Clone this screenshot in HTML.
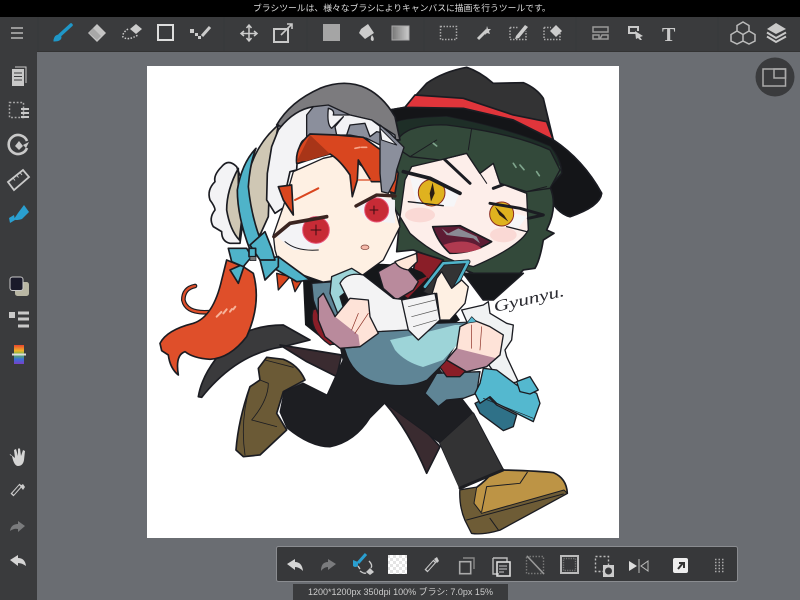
<!DOCTYPE html>
<html><head><meta charset="utf-8"><style>
html,body{margin:0;padding:0;background:#6a6d72}
body{width:800px;height:600px;overflow:hidden;position:relative;font-family:"Liberation Sans","Noto Sans CJK JP",sans-serif}
svg{position:absolute;left:0;top:0}
.t{position:absolute;white-space:nowrap}
</style></head><body>
<svg width="800" height="600" viewBox="0 0 800 600">
<defs>
<linearGradient id="gr" x1="0" x2="1" y1="0" y2="0"><stop offset="0" stop-color="#777"/><stop offset="1" stop-color="#ccc"/></linearGradient>
<linearGradient id="rb" x1="0" x2="0" y1="0" y2="1"><stop offset="0" stop-color="#e8452c"/><stop offset=".3" stop-color="#f0b42a"/><stop offset=".5" stop-color="#5fb84a"/><stop offset=".75" stop-color="#3a6fd8"/><stop offset="1" stop-color="#7a3fc8"/></linearGradient>
<pattern id="ch" width="6" height="6" patternUnits="userSpaceOnUse"><rect width="6" height="6" fill="#fff"/><rect width="3" height="3" fill="#e4e4e4"/><rect x="3" y="3" width="3" height="3" fill="#e4e4e4"/></pattern>
</defs>
<rect width="800" height="600" fill="#6a6d72"/>
<rect x="147" y="66" width="472" height="472" fill="#fff"/>

<g stroke="#1b1c22" stroke-linejoin="round" stroke-linecap="round">
<!-- back leg, tails -->
<g transform="translate(340 270) scale(.3333)" stroke-width="5">
<path d="M135 400L155 370L300 530L260 610Q205 480 135 400Z" fill="#3a2b30"/>
<path d="M300 520L400 430L490 600L360 655Z" fill="#333334"/>
<path d="M360 660L410 652Q440 630 452 612L490 600Q600 603 640 608Q680 625 682 670L480 780Q430 795 395 790L375 750Q358 710 360 660Z" fill="#bd9445"/>
<path d="M360 660L410 652L402 700L425 730L672 660L682 670L480 780Q430 795 395 790L375 750Q358 710 360 660Z" fill="#6e5c36" stroke-width="3"/>
<path d="M380 750L670 672M450 745L475 780M440 650L425 725M440 650L540 640L562 607" fill="none" stroke-width="3"/>
</g>
<g transform="translate(150 280) scale(.3333)" stroke-width="5">
<path d="M145 350Q160 260 260 170Q320 135 400 135L480 180L400 200Q260 220 155 352Z" fill="#3a3a3c"/>
<path d="M390 195L575 225L560 290L470 245Z" fill="#3a2b30"/>
<path d="M325 265L350 232L400 238Q445 255 465 300L400 335L380 400L410 450L330 525L280 530L258 510Q265 420 300 320L330 300Z" fill="#6b5a36"/>
<path d="M330 300L355 310Q355 360 305 420L380 440M300 320Q270 420 285 525M345 240L430 262" fill="none" stroke-width="2.5"/>
</g>
<!-- pants -->
<path d="M280 412L284 392L303 383L327 395L343 360L330 300L420 300L440 370L473 413L440 443L385 403L370 418Q355 442 330 447Q310 447 287 428Z" fill="#1d1e22"/>
<path d="M440 443L473 413L503 470L460 490Z" fill="#333334" stroke="none"/>
<path d="M460 488L503 470" stroke="#1d1e22" stroke-width="3"/>

<!-- right character: hat & hair -->
<g transform="translate(380 60) scale(.3333)" stroke-width="5">
<path d="M30 150L75 142L140 70Q190 35 260 22Q300 35 340 70L430 68Q470 85 490 115L520 240Q610 300 665 400Q660 440 570 470Q530 460 500 400L30 250Z" fill="#333334"/>
<path d="M30 150L75 142L250 145L400 180L520 240Q610 300 665 400Q660 440 570 470Q530 460 500 400L30 250Z" fill="#141518" />
<path d="M75 142L105 105L250 115L400 165L500 185L520 240L400 180L250 145Z" fill="#e0353b"/>
<path d="M45 190Q60 175 200 170Q400 210 510 260Q545 300 545 340L510 380Q535 440 500 510L522 520L490 540Q480 600 465 625L430 630L400 660L280 640L180 600L100 570L50 575L60 470L25 420L45 300Z" fill="#33493a"/>
<path d="M45 190Q60 175 200 170Q400 210 510 260Q535 290 540 320Q430 230 260 205Q120 190 45 250Z" fill="#1e2e27" stroke="none"/>
<path d="M250 640L430 640L340 720L310 720Z" fill="#15171a"/>
<path d="M95 320L180 300L260 280L300 340L340 310L360 370L440 400L445 510Q420 560 280 620Q180 600 90 520L60 470L75 360Z" fill="#fdeeea" stroke-width="4"/>
<ellipse cx="120" cy="465" rx="45" ry="22" fill="#fad9d5" stroke="none"/>
<ellipse cx="370" cy="525" rx="40" ry="22" fill="#fad9d5" stroke="none"/>
<path d="M90 350L240 395L222 440L110 435Z" fill="#f6f6f8" stroke="none"/>
<circle cx="155" cy="398" r="40" fill="#dfb21f" stroke="#8a2b20" stroke-width="3"/>
<path d="M158 368L164 400L153 425L149 400Z" fill="#2a1d12" stroke="none"/>
<path d="M70 335L150 355L240 400" fill="none" stroke-width="11"/>
<path d="M85 425L190 437" fill="none" stroke-width="4"/>
<path d="M328 440L440 470L412 508L345 490Z" fill="#f6f6f8" stroke="none"/>
<circle cx="365" cy="462" r="36" fill="#dfb21f" stroke="#8a2b20" stroke-width="3"/>
<path d="M345 440L372 465L385 485L358 465Z" fill="#2a1d12" stroke="none"/>
<path d="M330 430L420 445L490 465L445 475" fill="none" stroke-width="9"/>
<path d="M380 500L440 515" fill="none" stroke-width="4"/>
<path d="M185 290L270 370M340 385L380 370" fill="none" stroke-width="9"/>
<path d="M158 500L240 497L335 545Q280 580 210 580Q175 550 158 500Z" fill="#5e1c34"/>
<path d="M190 555Q260 530 305 565Q260 582 210 578Z" fill="#b03a50" stroke="none"/>
<path d="M185 505L205 520L235 505L290 530L300 550L280 535L200 525Z" fill="#8a8a94" stroke="none"/>
<path d="M45 260Q60 190 200 195Q400 220 510 270L540 330L510 385L440 395L360 370L340 310L300 340L260 280L180 300L90 290Z" fill="#33493a" stroke-width="4"/>
<path d="M90 290L170 240M265 270L275 205M300 340L320 370M440 395L500 380" fill="none" stroke-width="3"/>
<path d="M400 310l8 12M420 315l12 14M470 335l8 12M160 250l10 8" stroke="#7fa58c" stroke-width="5" fill="none"/>
<path d="M110 575L190 600L130 680L90 690Z" fill="#8a1e28"/>
</g>
<!-- torso black -->
<path d="M303 280L345 262L405 265L422 272L440 290L460 320L420 345L330 345L305 325Z" fill="#15171a" stroke="none"/>
<path d="M416 281L430 275L408 298L396 290Z" fill="#8a1e28" stroke="none"/>
<path d="M313 310Q308 330 330 345L345 340L325 305Z" fill="#8a1e28" stroke-width="1.2"/>

<!-- left char sock & teal shoe -->
<g transform="translate(340 270) scale(.3333)" stroke-width="4">
<path d="M255 370L290 310L420 305L410 370L370 385L320 390L295 410Z" fill="#5f8596"/>
<path d="M365 120L430 105L445 95L450 130L500 160L520 165L515 210L495 240L500 260L535 335L490 345L450 290L400 200Z" fill="#f0f2f3"/>
<path d="M405 400L445 380L470 405L530 435L520 470L490 482L420 430Z" fill="#2f7188"/>
<path d="M430 295L470 300L530 345L590 370L600 400L580 455L470 400L450 380L420 400L405 370L420 340Z" fill="#54b8cf"/>
<path d="M530 335L570 320L595 360L570 372L540 365Z" fill="#54b8cf"/>
<path d="M430 385L580 445" fill="none" stroke-width="2"/>
<path d="M295 285L320 270L380 300L360 320L320 320Z" fill="#8a1e28"/>
</g>
<path d="M345 350Q352 375 375 382Q405 390 427 380L445 362L470 322L400 325L340 340Z" fill="#5f8596"/>
<path d="M390 340L423 333L455 325L468 325L457 345L443 360L423 367Q405 362 395 350Z" fill="#9dd4d8" stroke="none"/>

<!-- red hair tail -->
<g transform="translate(150 280) scale(.3333)" stroke-width="5">
<path d="M135 18Q100 25 100 60Q110 105 190 95" fill="none" stroke="#1b1c22" stroke-width="14"/>
<path d="M135 18Q100 25 100 60Q110 105 190 95" fill="none" stroke="#df4f2a" stroke-width="7"/>
<path d="M30 190Q50 150 130 130Q190 110 215 0L230 -60L280 -40L310 -20Q335 70 290 170Q240 235 180 238Q130 235 105 215Q75 225 85 285Q60 265 55 225L35 212Z" fill="#df4f2a"/>
<path d="M200 110l14 -14M220 100l10 -12M240 95l6 -8M250 88l6 -8" stroke="#f7b39a" stroke-width="6" fill="none"/>
</g>

<!-- left head -->
<g transform="translate(150 60) scale(.3333)" stroke-width="5">
<path d="M380 195Q420 125 510 85Q585 55 650 85Q700 110 735 170L750 240L480 230Z" fill="#7c7b7e"/>
<path d="M260 320Q235 295 215 320Q190 345 195 365Q170 390 180 420Q195 440 195 450Q175 475 190 500L215 515Q215 545 240 550L270 550L290 400Z" fill="#f3f3f5"/>
<path d="M385 195Q320 250 295 340Q290 440 300 500L330 525L355 470L360 330Z" fill="#cfc7b4"/>
<path d="M265 325Q230 390 230 450Q240 510 268 540L275 480L265 400Z" fill="#cfc7b4"/>
<path d="M318 265Q275 310 262 390Q262 470 300 570L340 560Q305 480 295 380Q300 310 318 265Z" fill="#4fb3c9"/>
<path d="M385 210Q430 150 490 140L470 240Q445 230 440 330L420 335L410 380L405 440L375 460L350 420L352 340L365 260Z" fill="#f3f3f5"/>
<path d="M470 165L490 140L535 135L600 165L665 180L735 225L745 300L700 260L650 235L600 225L560 225L470 240Z" fill="#8b8f9c" stroke-width="4"/>
<path d="M535 145Q555 150 550 165L600 165L665 180L725 225L680 215L660 230L645 190L600 195L590 225L560 225L555 200L580 170L545 205Q530 195 535 145Z" fill="#f3f3f5" stroke-width="4"/>
<path d="M370 525L400 440L430 335L520 295L590 280L720 390L750 500L700 600L630 651L519 666L390 621L375 570Z" fill="#fef0e3" stroke-width="4"/>
<path d="M440 310Q435 260 480 222L560 225L640 232L720 290L745 340L735 400L718 395L700 330L695 365L665 365L625 300L622 360L607 410L600 345Q570 300 540 282Q490 295 445 310Z" fill="#d9461f"/>
<path d="M440 305L480 225L540 282L470 303Z" fill="#a83518" stroke="none"/>
<path d="M625 360L665 360" stroke="#d9461f" stroke-width="4" fill="none"/>
<path d="M385 380L425 375L430 465L400 420Z" fill="#d9461f"/>
<path d="M435 420L505 385" stroke="#d9461f" stroke-width="6" fill="none"/>
<path d="M615 265l15 -3M635 262l15 0" stroke="#f7a58a" stroke-width="5" fill="none"/>
<path d="M375 525L430 490L530 470L540 520L505 565L430 570Z" fill="#f3f3f6" stroke="none"/>
<circle cx="498" cy="510" r="40" fill="#c72b36" stroke="#e9557a" stroke-width="3"/>
<path d="M498 495V525M483 510H513" stroke="#3a0d12" stroke-width="3"/>
<path d="M372 530L420 490L530 470" fill="none" stroke="#3a2420" stroke-width="11"/>
<path d="M405 545Q440 575 505 570" fill="none" stroke-width="3"/>
<path d="M620 440L690 410L735 420L735 490L650 480Z" fill="#f3f3f6" stroke="none"/>
<circle cx="680" cy="450" r="36" fill="#c72b36" stroke="#e9557a" stroke-width="3"/>
<path d="M672 438V462M660 450H684" stroke="#3a0d12" stroke-width="3"/>
<path d="M618 438L680 405L735 408" fill="none" stroke="#3a2420" stroke-width="10"/>
<ellipse cx="645" cy="562" rx="12" ry="7" fill="#f4b8a8" stroke="#7a4238" stroke-width="2"/>
<path d="M380 640L420 650L385 690ZM425 660L460 655L435 695Z" fill="#d9461f" stroke-width="4"/>
<path d="M330 600L385 590L480 660L440 665Z" fill="#4fb3c9"/>
<path d="M240 630L285 610L265 670ZM330 600L385 590L385 620L345 660Z" fill="#4fb3c9"/>
<path d="M235 565L290 565L305 590L280 620L245 605Z" fill="#4fb3c9"/>
<path d="M300 555L345 515L365 565L375 600L330 600Z" fill="#4fb3c9"/>
<rect x="297" y="565" width="20" height="25" fill="#4fb3c9"/>
<path d="M300 590h18v12h-18z" fill="#777" stroke-width="2"/>
</g>
<!-- grey frill right -->
<g transform="translate(380 60) scale(.3333)" stroke-width="4">
<path d="M0 195L30 220L72 262L50 330L45 360L25 400L5 395L0 340Z" fill="#8b8f9c"/>
<path d="M0 205L50 255L5 240Z" fill="#f3f3f5" stroke-width="3"/>
</g>

<!-- arms -->
<g transform="translate(280 220) scale(.3333)" stroke-width="4">
<path d="M95 190L160 185L175 290L120 300L100 240Z" fill="#5f8596"/>
<path d="M295 155L340 130L410 100L410 125L385 150L415 185L400 210L350 240L310 205Z" fill="#b98a9c"/>
<path d="M345 125L410 100L412 125L385 150Q355 145 345 125Z" fill="#fee7d9"/>
<path d="M430 215L490 130L565 125L520 212L460 230Z" fill="#333334" stroke="#1b1c22" stroke-width="3"/>
<path d="M435 200L490 130L565 125L520 212" fill="none" stroke="#1b1c22" stroke-width="13"/>
<path d="M435 200L490 130L565 125L520 212" fill="none" stroke="#4fb3c9" stroke-width="8"/>
<path d="M455 225L470 175L485 155L515 205L545 180L565 200L555 250L510 300L480 300L470 220Z" fill="#fef0e3"/>
<path d="M155 170L215 145L255 170L180 230L195 280L175 285L150 220Z" fill="#9dd4d8"/>
<path d="M180 190Q200 155 250 165L340 235L380 240L385 330L290 335L230 290Z" fill="#f3f3f4"/>
<path d="M365 240L465 220L480 300L415 360L385 330Z" fill="#f3f3f4"/>
<path d="M385 260L465 240M395 290L470 270M400 320L470 300" stroke="#555" stroke-width="2" fill="none"/>
<path d="M115 235L130 220L165 290L210 235L265 240L270 290L295 340L240 380L180 385L135 350L115 300Z" fill="#fee3d8"/>
<path d="M115 235L130 220L165 290L235 345L240 380L180 385L135 350L115 300Z" fill="#b98a9c" stroke="none"/>
<path d="M115 235L130 220L165 290M115 235L115 300L135 350L180 385L240 380" fill="none"/>
<path d="M235 280L215 330M265 280L225 340" stroke="#8a2b20" stroke-width="2" fill="none"/>
</g>
<g transform="translate(340 270) scale(.3333)" stroke-width="4">
<path d="M360 170L400 150L450 170L490 195L480 255L440 290L380 305L320 270L350 235Z" fill="#fee3d8"/>
<path d="M350 235L470 265L440 290L380 305L320 270Z" fill="#b98a9c" stroke="none"/>
<path d="M350 235L320 270L380 305L440 290L480 255" fill="none"/>
<path d="M395 165L395 235M425 170L420 240" stroke="#8a2b20" stroke-width="2" fill="none"/>
<path d="M380 160L395 140L410 155Z" fill="#54b8cf" stroke-width="2"/>
</g>
</g>
<text x="495" y="312" font-family="Liberation Serif" font-style="italic" font-size="16" fill="#2a2a30" transform="rotate(-13 495 312)" textLength="72" lengthAdjust="spacingAndGlyphs">Gyunyu.</text>

<!-- UI chrome -->
<rect x="0" y="0" width="800" height="17" fill="#000"/>
<rect x="0" y="17" width="800" height="34" fill="#3a3b3d"/>
<rect x="0" y="51" width="37" height="549" fill="#3a3b3d"/>
<rect x="37" y="51" width="763" height="1" fill="#333"/>
<path d="M38 17v34M224 17v34M307 17v34M424 17v34M576 17v34M718 17v34" stroke="#37383a"/>
<g fill="none" stroke="#c9c9c9" stroke-width="1.5">
<path d="M11 28H23M11 33H23M11 38H23" stroke="#999" stroke-width="2"/>
<path d="M71 25L60 35" stroke="#1f97c8" stroke-width="3.5" stroke-linecap="round"/>
<path d="M54 40Q55 35 59 35L61 37Q61 41 54 41Z" fill="#1f97c8" stroke="#1f97c8" stroke-width="1"/>
<path d="M97 24L106 33L97 42L88 33Z" fill="#c4c4c4" stroke="none"/>
<path d="M93 28L101 36L97 40L89 33Z" fill="#3a3b3d" opacity=".2" stroke="none"/>
<path d="M128 29Q122 33 123 37Q128 41 138 35" stroke-dasharray="1.5 1.5"/>
<path d="M136 24L142 29L136 34L130 29Z" fill="#ccc" stroke="none"/>
<rect x="158" y="25" width="15" height="15" stroke="#ddd" stroke-width="2"/>
<path d="M190 29h4v4h-4zM195 33h3v3h-3zM198 36h3v3h-3z" fill="#ccc" stroke="none"/>
<path d="M202 36L210 27" stroke="#ccc" stroke-width="3"/>
<path d="M249 26V41M242 33.500H257M246.500 28L249 25L251.500 28M246.500 38L249 41L251.500 38M244 31L241 33.500L244 36M254 31L257 33.500L254 36" stroke="#ccc"/>
<rect x="274" y="29" width="14" height="13" stroke-width="2"/>
<path d="M281 35L292 24M287 24H292V29" stroke-width="1.6"/>
<rect x="323" y="24" width="17" height="17" fill="#a5a5a5" stroke="none"/>
<path d="M361 29L368 24L374 33L365 39L359 33Z" fill="#ccc" stroke="none"/>
<path d="M372 35Q375 39 373 41Q370 41 371 37Z" fill="#ccc" stroke="none"/>
<rect x="392" y="26" width="17" height="14" fill="url(#gr)" stroke="#aaa" stroke-width="1"/>
<rect x="440.500" y="26.500" width="16" height="13" stroke-dasharray="1.500 1.500" stroke="#aaa"/>
<path d="M478 39L487 30" stroke-width="3" stroke="#ccc"/>
<path d="M487 26l1 3 3 0-2 2 1 3-3-1-2 2" fill="#ccc" stroke="none"/>
<path d="M510 27.500H518M510 27.500V39.500H526V31" stroke-dasharray="1.500 1.500" stroke="#aaa"/>
<path d="M516 36L525 25L528 27L519 38L515 39Z" fill="#ccc" stroke="none"/>
<path d="M544 27.500H551M544 27.500V39.500H560V33" stroke-dasharray="1.500 1.500" stroke="#aaa"/>
<path d="M556 25L562 31L556 37L550 31Z" fill="#ccc" stroke="none"/>
<rect x="593" y="27" width="15" height="5" stroke="#999"/>
<path d="M593 35H599V39H593ZM602 35H608V39H600Z" stroke="#999"/>
<path d="M636 33H629V27H638V31" stroke-width="2"/>
<path d="M635 31L643 36L640 37L642 40L640 40L638 38L636 39Z" fill="#ccc" stroke="none"/>
<path d="M743 23L749 26.500V32L743 35.500L737 32V26.500ZM737 32L743 35.500V42L737 45L731 42V35.500ZM749 32L755 35.500V42L749 45L743 42V35.500Z" transform="translate(0 -1)" stroke="#bbb"/>
<path d="M776 23L786 29L776 34L767 29Z" fill="#c9c9c9" stroke="none"/>
<path d="M767 32.500L776 38L786 32.500M767 36.500L776 42L786 36.500" stroke-width="2"/>
<circle cx="775" cy="77" r="19.500" fill="#3a3b3d" stroke="none"/>
<rect x="763" y="69" width="22.500" height="17" stroke="#aaa"/>
<rect x="774" y="69" width="11.500" height="9" stroke="#aaa"/>
</g>
<!-- left bar icons -->
<g fill="none" stroke="#c9c9c9" stroke-width="1.500">
<path d="M15 67H26V83" stroke-width="1"/>
<path d="M12 69H24V86H12Z" fill="#c9c9c9" stroke="none"/>
<path d="M14 73H22M14 76.500H22M14 80H22" stroke="#3a3b3d" stroke-width="1"/>
<rect x="9.500" y="102.500" width="14" height="15" stroke-dasharray="1.800 1.800" stroke="#aaa"/>
<path d="M21 109H29M21 113H29M21 117H29" stroke-width="2"/>
<path d="M27 148A9.500 9.500 0 1 1 27 141" stroke-width="2.600"/>
<path d="M29 142L26 148L23 145Z" fill="#c9c9c9" stroke="none"/>
<path d="M19 141L23 146L19 150L15 146Z" fill="#c9c9c9" stroke="none"/>
<path d="M8 182L23 170L29 177L14 190Z" stroke-width="1.800"/>
<path d="M13 178l2 2.500M16.500 175l2 2.500M20 172.500l2 2.500" stroke-width="1"/>
<path d="M18 213L24 205L29 212L22 219Q15 221 14 219Z" fill="#2a9fd0" stroke="none"/>
<path d="M9 218L14 215L15 220L10 223Z" fill="#2a9fd0" stroke="none"/>
<rect x="15" y="282" width="14" height="14" rx="2.500" fill="#b9b7a4" stroke="none"/>
<rect x="10" y="277" width="13" height="13.500" rx="2.500" fill="#1a1a2a" stroke="#c9c9c9" stroke-width="1"/>
<rect x="9" y="312" width="6" height="6" fill="#c9c9c9" stroke="none"/>
<path d="M18 313H29M18 319H29M18 326H29" stroke-width="3"/>
<rect x="14" y="345" width="10" height="19" fill="url(#rb)" stroke="none"/>
<path d="M12 354.500H26" stroke="#ddd" stroke-width="2"/>
<path d="M12 456Q9 455 10 454L15 458L14 450L16 449L18 456L18 448.500L20 448.500L21 456L23 450L25 451L24 460Q23 466 18 466Q14 466 12 456Z" fill="#d5d5d5" stroke="none"/>
<path d="M12 495L21 485" stroke-width="4" stroke="#ccc"/>
<path d="M13 494L20 486" stroke-width="2" stroke="#3a3b3d"/>
<path d="M20 486L23 484L25 487L23 490Z" fill="#ccc" stroke="none"/>
<path d="M25 526L18 521V524Q11 524 10 531Q14 528 18 529V532Z" fill="#7a7b7d" stroke="none"/>
<path d="M10 560L18 555V558Q25 558 26 566Q22 563 18 563V566Z" fill="#d5d5d5" stroke="none"/>
</g>
<!-- bottom panel -->
<rect x="276.500" y="546.500" width="461" height="35" rx="2" fill="#37383a" stroke="#8a8c90"/>
<rect x="293" y="584" width="215" height="16" fill="#3a3b3d"/>
<g fill="none" stroke="#c9c9c9" stroke-width="1.400">
<path d="M287 564L295 559V562Q302 562 303 571Q299 567 295 567V570Z" fill="#d5d5d5" stroke="none"/>
<path d="M336 564L328 559V562Q321 562 321 571Q324 567 328 567V570Z" fill="#7a7b7d" stroke="none"/>
<path d="M366 554L358 563" stroke="#2a9fd0" stroke-width="3"/>
<path d="M353 560L358 562L358 566Q355 568 353 566Z" fill="#2a9fd0" stroke="none"/>
<path d="M369 561Q373 565 371 568M360 571Q364 574 366 573M358 566l2 3" stroke-width="1.400"/>
<path d="M370 568L374 572L370 575L366 572Z" fill="#ccc" stroke="none"/>
<rect x="388" y="555" width="19" height="19" fill="url(#ch)" stroke="none"/>
<path d="M426 571L435 561" stroke-width="4"/>
<path d="M427 570L434 562" stroke-width="2" stroke="#37383a"/>
<path d="M434 559L437 557L439 561L437 563Z" fill="#ccc" stroke="none"/>
<rect x="459.700" y="561.700" width="11" height="12" stroke-width="1.600" stroke="#aaa"/>
<path d="M463 558H474V569" stroke="#888"/>
<path d="M493 558H507V562M493 558V574H499" stroke="#bbb"/>
<rect x="497" y="562" width="13" height="14" stroke="#ddd" stroke-width="1.600"/>
<path d="M499 566H507M499 569H507M499 572H504" stroke-width="1"/>
<rect x="526.500" y="556.500" width="17" height="17" stroke-dasharray="1.500 1.500" stroke="#777"/>
<path d="M527 556L544 574" stroke="#999" stroke-width="1.600"/>
<rect x="561" y="556" width="17" height="17" stroke="#bbb" stroke-width="2"/>
<rect x="563.500" y="558.500" width="12" height="12" stroke-dasharray="1.200 1.200" stroke="#777"/>
<rect x="595.500" y="556.500" width="13" height="15" stroke-dasharray="2 2" stroke="#bbb"/>
<rect x="603" y="565" width="11" height="12" fill="#ccc" stroke="none"/>
<circle cx="608.500" cy="571" r="3.500" fill="#37383a" stroke="none"/>
<path d="M629 561L637 566L629 571Z" fill="#ddd" stroke="none"/>
<path d="M648 561L641 566L648 571Z" stroke="#bbb" stroke-width="1"/>
<path d="M639 559V573" stroke="#bbb" stroke-width="1"/>
<rect x="673" y="558" width="15" height="15" rx="2" fill="#eee" stroke="none"/>
<path d="M678 569L683 563M679 563H684V568" stroke="#333" stroke-width="2"/>
<path d="M715 559.500H724M715 562.500H724M715 565.500H724M715 568.500H724M715 571.500H724" stroke="#aaa" stroke-width="1.500" stroke-dasharray="1.500 2"/>
</g>
<text x="662" y="41" font-family="Liberation Serif" font-weight="bold" font-size="20" fill="#c9c9c9">T</text>
</svg>
<div class="t" style="left:253px;top:2px;font-size:8.8px;line-height:12px;color:#ddd">ブラシツールは、様々なブラシによりキャンバスに描画を行うツールです。</div>
<div class="t" style="left:308px;top:586px;font-size:9px;line-height:13px;color:#ccc">1200*1200px 350dpi 100% ブラシ: 7.0px 15%</div>
</body></html>
